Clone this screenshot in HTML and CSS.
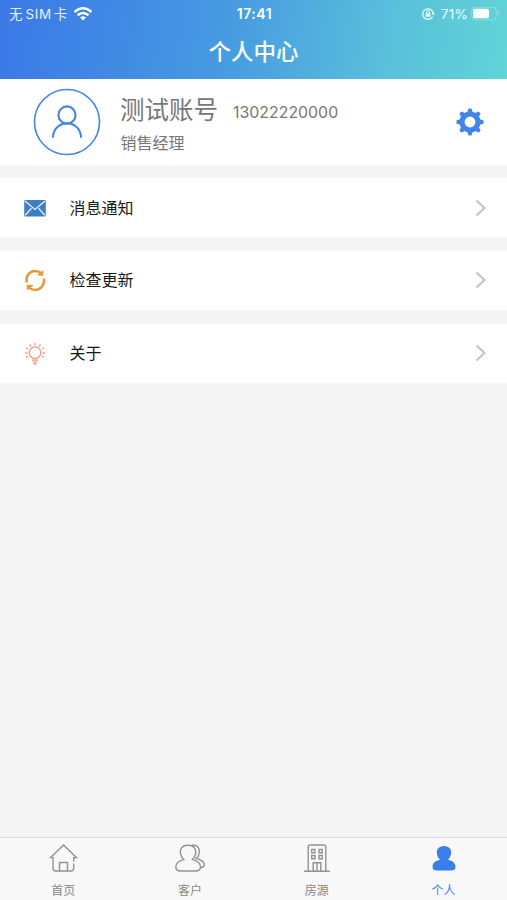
FILE: index.html
```
<!DOCTYPE html>
<html lang="zh-CN">
<head>
<meta charset="utf-8">
<title>个人中心</title>
<link rel="stylesheet" href="styles.css">
</head>
<body>
<header class="header">
  <div class="status">
    <div class="status-left">
      <span class="carrier">无<span class="sim">SIM</span>卡</span>
      <svg width="20" height="15" viewBox="0 0 20 15" fill="none" stroke="#fff" stroke-width="2.5"><path d="M1.500 5Q10-2.400 18.500 5M4.600 8.300Q10 3.600 15.400 8.300"/><path d="M7 10.400Q10 8.100 13 10.400L10 13.600Z" fill="#fff" stroke="none"/></svg>
    </div>
    <span class="time">17:41</span>
    <div class="status-right">
      <svg width="14" height="14" viewBox="0 0 14 14" fill="none" stroke="#effcff" stroke-width="1.300"><path d="M11.600 9.800A5.300 5.300 0 1 1 12.200 6"/><path d="M10.500 6h3.300l-1.600 2.500z" fill="#effcff" stroke="none"/><path d="M5.500 6.500V5.300a1.500 1.500 0 0 1 3 0v1.200" stroke-width="1"/><rect x="4.600" y="6.200" width="4.800" height="3.500" rx=".5" fill="#effcff" stroke="none"/></svg>
      <span class="percent">71%</span>
      <svg width="29" height="14" viewBox="0 0 29 14"><rect x=".7" y=".2" width="24.600" height="12.600" rx="3.500" fill="none" stroke="#fff" stroke-opacity=".3"/><rect x="2" y="1.700" width="16" height="9.600" rx="2" fill="#fff"/><path d="M27 4.300q2 2.200 0 4.400z" fill="#fff" fill-opacity=".45"/></svg>
    </div>
  </div>
  <h1 class="title">个人中心</h1>
</header>

<section class="profile">
  <svg class="avatar" width="68" height="68" viewBox="0 0 68 68" fill="none" stroke="#4384e6"><circle cx="34" cy="34" r="32.500" stroke-width="1.600"/><circle cx="34" cy="27" r="8.600" stroke-width="2.100"/><path d="M20 49.700V48C22 31 46 31 48 48v1.700" stroke-width="2.100"/></svg>
  <div class="info">
    <div class="name-line"><span class="name">测试账号</span><span class="phone">13022220000</span></div>
    <div class="role">销售经理</div>
  </div>
  <svg class="gear" width="28" height="28" viewBox="-14 -14 28 28" fill="#4285ea">
    <circle r="8" fill="none" stroke="#4285ea" stroke-width="5.200"/>
    <g id="teeth"><path id="tooth" d="M-2.700-9.500L-1.700-13.300Q0-13.900 1.700-13.300L2.700-9.500Z"/><use href="#tooth" transform="rotate(45)"/><use href="#tooth" transform="rotate(90)"/><use href="#tooth" transform="rotate(135)"/></g>
    <use href="#teeth" transform="rotate(180)"/>
  </svg>
</section>

<main class="menu">
  <div class="row">
    <svg class="icon" width="24" height="24" viewBox="0 0 24 24"><rect x="1.200" y="4" width="21.600" height="16.400" rx="1" fill="#3e7dc6"/><path d="M2 5l10 8.500L22 5M2.200 19.200l6.300-7M21.800 19.200l-6.300-7" fill="none" stroke="#e3f0ff" stroke-width="1.300"/></svg>
    <span class="label">消息通知</span>
    <svg class="arrow" width="12" height="18" viewBox="0 0 12 18"><path d="M1.500 1.500L9.500 9l-8 7.500"/></svg>
  </div>
  <div class="row">
    <svg class="icon" width="24" height="24" viewBox="0 0 24 24" fill="none" stroke="#e59b35" stroke-width="2.500"><path d="M3.700 14.500C2.500 8 6.500 3 12 3c2.600 0 4.700.8 6.300 2.300M21.100 10.500C21.700 17 17.500 22 12 22c-2.600 0-4.700-1-6.300-2.600"/><path d="M20.300 2v6l-6.500-.7zM3.700 22.500v-6l7.200.7z" fill="#e59b35" stroke="none"/></svg>
    <span class="label">检查更新</span>
    <svg class="arrow" width="12" height="18" viewBox="0 0 12 18"><path d="M1.500 1.500L9.500 9l-8 7.500"/></svg>
  </div>
  <div class="row">
    <svg class="icon" width="24" height="24" viewBox="0 0 24 24" fill="none" stroke="#ef9a7f" stroke-width="1.300"><circle cx="12" cy="11.700" r="5.800"/><path d="M12 4.500V2M7.900 5.600L6.600 3.400M16.100 5.600l1.300-2.200M4.900 8L2.800 6.800M19.100 8l2.100-1.200M4.600 12H2.200M19.400 12h2.400M5.300 15.200l-2.100 1M18.700 15.200l2.100 1M9 19.200h6M9.700 21.200h4.600M10.500 23h3"/></svg>
    <span class="label">关于</span>
    <svg class="arrow" width="12" height="18" viewBox="0 0 12 18"><path d="M1.500 1.500L9.500 9l-8 7.500"/></svg>
  </div>
</main>

<nav class="tabs">
  <div class="tab">
    <svg width="30" height="30" viewBox="0 0 30 30"><path d="M25.700 18.500V14.600H28.500L15.500 2 2.500 14.600H5V25q0 3 3 3h14.700q3 0 3-3v-4.500M11.500 28v-8.500h8V28"/></svg>
    <span>首页</span>
  </div>
  <div class="tab">
    <svg width="30" height="30" viewBox="0 0 30 30"><path d="M13 2.200c-9 0-9.500 8.800-4.200 14.400C5 17.500.8 19.500.8 24c0 3 2 4 5 4h14.700c3 0 5-1 5-4 0-4.500-4.200-6.500-8-7.400C22.500 11 22 2.200 13 2.200zM17 2.300c8-1 9.500 7.700 4.200 13.200 5 1.200 8 3 8 6.500 0 1.800-1.500 2.500-3.700 2.700"/></svg>
    <span>客户</span>
  </div>
  <div class="tab">
    <svg width="30" height="30" viewBox="0 0 30 30"><path d="M2 28.200h26M6.200 28V4q0-2 2-2h13.600q2 0 2 2v24M11.200 28v-8.300h7.600V28M15 20v8M9.700 6.500h3.200v3.200H9.700zM17 6.500h3.200v3.200H17zM9.700 12.500h3.200v3.200H9.700zM17 12.500h3.200v3.200H17z"/></svg>
    <span>房源</span>
  </div>
  <div class="tab active">
    <svg width="30" height="30" viewBox="0 0 30 30"><path d="M15 3C6.500 3 6 12 11 16.700c-4 1-7.500 3-7.500 6.800C3.500 26.500 5 27.500 8 27.500h14c3 0 4.500-1 4.500-4 0-3.800-3.500-5.800-7.500-6.800C24 12 23.500 3 15 3z"/></svg>
    <span>个人</span>
  </div>
</nav>
</body>
</html>
```
FILE: styles.css
```
* { box-sizing: border-box; }
body {
  margin: 0;
  height: 900px;
  display: flex;
  flex-direction: column;
  overflow: hidden;
  background: #f5f5f5;
  font-family: Inter, "Noto Sans CJK SC", sans-serif;
}
svg { display: block; flex: none; }
.header {
  height: 79px;
  flex: none;
  color: #fff;
  background: linear-gradient(98deg, #3a78e7 0%, #479be1 45%, #59bedb 75%, #60d4d6 100%);
}
.status {
  height: 28px;
  padding: 0 7px 0 9px;
  display: grid;
  grid-template-columns: 1fr auto 1fr;
  align-items: center;
  font-size: 13.5px;
  line-height: 28px;
}
.status-left, .status-right { display: flex; align-items: center; }
.status-left { gap: 4px; }
.carrier { color: #e7f2ff; white-space: nowrap; width: 60px; }
.sim { letter-spacing: .6px; margin: 0 2px 0 3px; }
.time { font-weight: 600; font-size: 14px; letter-spacing: .5px; }
.status-right { justify-content: flex-end; color: #effcff; }
.percent { margin: 0 3px 0 6px; letter-spacing: .3px; }
.title {
  margin: 0;
  font-size: 22.5px;
  line-height: 48px;
  font-weight: 500;
  text-align: center;
}
.profile {
  height: 86px;
  flex: none;
  padding: 0 23px 0 33px;
  display: flex;
  align-items: center;
  background: #fff;
  color: #777;
}
.info { margin-left: 19px; padding-top: 2px; flex: 1; }
.name-line { display: flex; align-items: center; height: 35px; }
.name { font-size: 24.5px; line-height: 35px; padding-top: 2px; }
.phone { margin: 8px 0 0 15px; font-size: 15.9px; line-height: 24px; }
.role { font-size: 16px; line-height: 24px; margin: 4px 0 0 .5px; }
.menu { flex: 1; padding-top: 13px; display: flex; flex-direction: column; gap: 13.75px; }
.row {
  height: 59px;
  flex: none;
  padding: 0 20px 0 23px;
  display: flex;
  align-items: center;
  background: #fff;
  color: #181818;
  font-size: 16px;
}
.label { margin-left: 22.5px; flex: 1; line-height: 24px; }
.arrow { fill: none; stroke: #c4c4c4; stroke-width: 2.1; }
.tabs {
  height: 63px;
  flex: none;
  border-top: 1px solid #dedede;
  background: #f8f8f8;
  display: grid;
  grid-template-columns: repeat(4, 1fr);
}
.tab {
  display: flex;
  flex-direction: column;
  align-items: center;
  padding-top: 5px;
  color: #888;
  font-size: 12px;
  line-height: 18px;
}
.tab svg { fill: none; stroke: #929292; stroke-width: 1.4; }
.tab span { margin-top: 9px; }
.active { color: #4384e6; }
.active svg { fill: #3a7fe9; stroke: none; }
```
